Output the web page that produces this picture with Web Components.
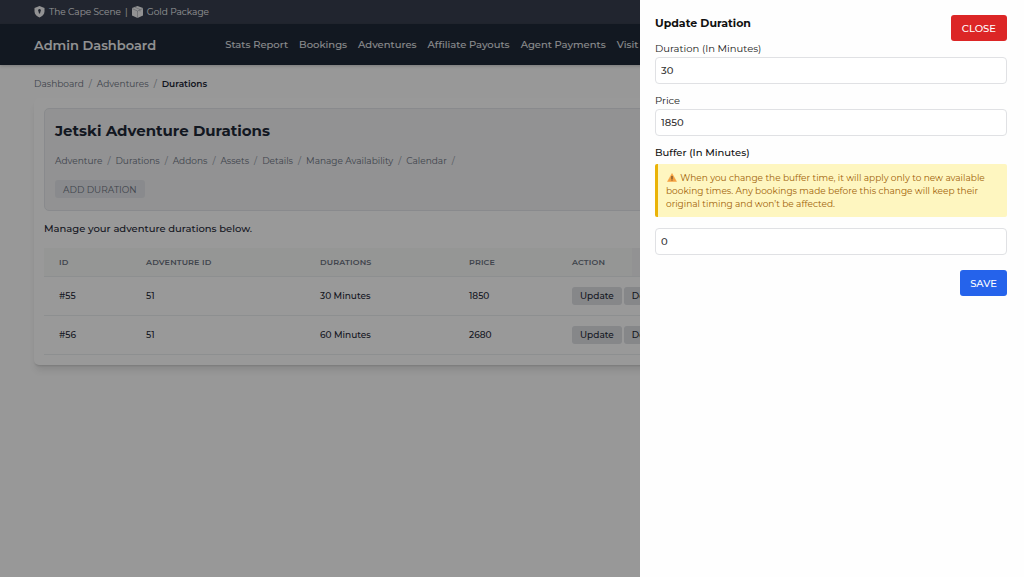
<!DOCTYPE html>
<html lang="en">
<head>
<meta charset="utf-8">
<meta name="viewport" content="width=device-width, initial-scale=1">
<title>Admin Dashboard</title>
<style>
    body {
        margin: 0;
        min-height: 100vh;
        overflow: hidden;
        background: #fdfdfd;
        color: #1f2937;
        font-family: Montserrat, Inter, "Open Sans", sans-serif;
        font-size: 9px;
    }
</style>
</head>
<body>
<admin-topbar></admin-topbar>
<admin-header></admin-header>
<crumb-trail></crumb-trail>
<durations-card>
    <durations-table></durations-table>
</durations-card>
<side-drawer>
    <span slot="title">Update Duration</span>
    <text-field label="Duration (In Minutes)" value="30"></text-field>
    <text-field label="Price" value="1850"></text-field>
    <text-field label="Buffer (In Minutes)" value="0" strong>
        <warning-note>When you change the buffer time, it will apply only to new available booking times. Any bookings made before this change will keep their original timing and won’t be affected.</warning-note>
    </text-field>
</side-drawer>

<script>
function attach(el, html) {
    const template = document.createElement('template');
    template.innerHTML = html;
    const root = el.attachShadow({ mode: 'open' });
    root.appendChild(template.content.cloneNode(true));
    return root;
}

class AdminTopbar extends HTMLElement {
    constructor() {
        super();
        attach(this, `
<style>
    :host {
        display: flex;
        align-items: center;
        gap: 4px;
        height: 24px;
        padding: 0 34px;
        background: #383f4f;
        color: #f3f4f6;
        line-height: 16px;
    }
    svg { width: 11px; height: 12px; fill: #f3f4f6; }
    svg path + path { fill: none; stroke: #8d919a; stroke-width: 1; }
</style>
<svg viewBox="0 0 22 24" aria-hidden="true">
    <path fill-rule="evenodd" d="M11 0 L21 4 V11 C21 17 16 21 11 23 C6 21 1 17 1 11 V4 Z M11 6 a3 3 0 0 0 -2 5 L10 15 H12 L13 11 A3 3 0 0 0 11 6 Z"/>
</svg>
<span>The Cape Scene</span>
<span>|</span>
<svg viewBox="0 0 22 24" aria-hidden="true">
    <path d="M11 0 L22 4 V19 L11 24 L0 19 V4 Z"/>
    <path d="M0 5 L11 10 L22 5 M11 10 V24 M5 2 L16 7 V11"/>
</svg>
<span>Gold Package</span>
`);
    }
}
customElements.define('admin-topbar', AdminTopbar);

class AdminHeader extends HTMLElement {
    constructor() {
        super();
        attach(this, `
<style>
    :host {
        display: grid;
        grid-template-columns: 1fr 4fr;
        align-items: center;
        height: 41px;
        padding: 0 34px;
        background: #1f2937;
        color: #f3f4f6;
        box-shadow: 0 1px 3px rgba(0, 0, 0, .2);
    }
    strong { font-size: 13px; font-weight: 600; white-space: nowrap; }
    nav { display: flex; gap: 11px; }
    a {
        color: #e5e7eb;
        font-size: 10px;
        font-weight: 500;
        text-decoration: none;
        white-space: nowrap;
    }
</style>
<strong>Admin Dashboard</strong>
<nav>
    <a href="#stats">Stats Report</a>
    <a href="#bookings">Bookings</a>
    <a href="#adventures">Adventures</a>
    <a href="#payouts">Affiliate Payouts</a>
    <a href="#agents">Agent Payments</a>
    <a href="#visit">Visit</a>
</nav>
`);
    }
}
customElements.define('admin-header', AdminHeader);

class CrumbTrail extends HTMLElement {
    constructor() {
        super();
        attach(this, `
<style>
    :host { display: block; padding: 12px 34px 7px; }
    nav {
        display: flex;
        gap: 5px;
        line-height: 14px;
        color: #8b929c;
    }
    a { color: #6b7280; text-decoration: none; }
    b { color: #1f2937; font-weight: 600; }
</style>
<nav aria-label="Breadcrumb">
    <a href="#dashboard">Dashboard</a><span>/</span>
    <a href="#adventures">Adventures</a><span>/</span>
    <b>Durations</b>
</nav>
`);
    }
}
customElements.define('crumb-trail', CrumbTrail);

class DurationsCard extends HTMLElement {
    constructor() {
        super();
        attach(this, `
<style>
    :host {
        display: block;
        margin: 0 34px;
        padding: 10px;
        background: #fff;
        border-radius: 5px;
        box-shadow: 0 7px 7px -2px rgba(0, 0, 0, .1), 0 2px 2px -1px rgba(0, 0, 0, .12);
    }
    header {
        padding: 12px 10px;
        background: #f3f4f6;
        border: 1px solid #e5e7eb;
        border-radius: 5px;
    }
    h1 {
        margin: 0 0 13px;
        font-size: 15px;
        line-height: 20px;
        font-weight: 700;
    }
    nav {
        display: flex;
        gap: 5px;
        margin-bottom: 12px;
        line-height: 14px;
        color: #8b929c;
    }
    a { color: #6b7280; text-decoration: none; }
    button {
        display: block;
        height: 18px;
        padding: 0 8px;
        border: 0;
        border-radius: 3px;
        background: #e5e7eb;
        color: #6b7280;
        font: inherit;
    }
    p {
        margin: 10px 0 11px;
        font-size: 10px;
        line-height: 16px;
        font-weight: 500;
    }
</style>
<header>
    <h1>Jetski Adventure Durations</h1>
    <nav>
        <a href="#adventure">Adventure</a><span>/</span>
        <a href="#durations">Durations</a><span>/</span>
        <a href="#addons">Addons</a><span>/</span>
        <a href="#assets">Assets</a><span>/</span>
        <a href="#details">Details</a><span>/</span>
        <a href="#availability">Manage Availability</a><span>/</span>
        <a href="#calendar">Calendar</a><span>/</span>
    </nav>
    <button type="button">ADD DURATION</button>
</header>
<p>Manage your adventure durations below.</p>
<slot></slot>
`);
    }
}
customElements.define('durations-card', DurationsCard);

class DurationsTable extends HTMLElement {
    constructor() {
        super();
        const rows = [
            ['#55', '51', '30 Minutes', '1850'],
            ['#56', '51', '60 Minutes', '2680']
        ];
        const body = rows.map(row => `
    <tr>
        ${row.map(cell => `<td>${cell}</td>`).join('')}
        <td colspan="2"><div><button type="button">Update</button><button type="button">Delete</button></div></td>
    </tr>`).join('');
        attach(this, `
<style>
    :host { display: block; }
    table {
        width: 100%;
        table-layout: fixed;
        border-collapse: collapse;
        font-weight: 500;
    }
    .id { width: 87px; }
    .adventure { width: 174px; }
    .duration { width: 149px; }
    .price { width: 103px; }
    .action { width: 75px; }
    th, td {
        box-sizing: border-box;
        padding: 0 15px;
        border-bottom: 1px solid #eceef0;
        text-align: left;
        white-space: nowrap;
    }
    th {
        height: 28px;
        background: #f8faf9;
        color: #6b7280;
        font-size: 8px;
        font-weight: 600;
        letter-spacing: .02em;
    }
    th:last-child { background: #f3f4f6; }
    td { height: 39px; }
    div { display: flex; gap: 2px; }
    button {
        height: 18px;
        padding: 0 8px;
        border: 0;
        border-radius: 3px;
        background: #dfe1e5;
        color: #1f2937;
        font: inherit;
    }
</style>
<table>
    <colgroup>
        <col class="id"><col class="adventure"><col class="duration"><col class="price"><col class="action"><col>
    </colgroup>
    <thead>
        <tr><th>ID</th><th>ADVENTURE ID</th><th>DURATIONS</th><th>PRICE</th><th>ACTION</th><th></th></tr>
    </thead>
    <tbody>${body}</tbody>
</table>
`);
    }
}
customElements.define('durations-table', DurationsTable);

// Backdrop plus the panel that slides in from the right
class SideDrawer extends HTMLElement {
    constructor() {
        super();
        attach(this, `
<style>
    :host {
        position: fixed;
        inset: 0;
        display: flex;
        justify-content: flex-end;
        background: rgba(0, 0, 0, .4);
        color: #111;
    }
    aside {
        box-sizing: border-box;
        width: 37.5%;
        padding: 15px 17px 15px 15px;
        background: #fefefe;
        overflow: auto;
    }
    header {
        display: flex;
        align-items: flex-start;
        justify-content: space-between;
    }
    h2 {
        margin: 0;
        font-size: 11px;
        line-height: 16px;
        font-weight: 700;
    }
    form {
        display: flex;
        flex-direction: column;
        gap: 9px;
    }
    button {
        height: 26px;
        padding: 0 10px;
        border: 0;
        border-radius: 3px;
        color: #fff;
        font: inherit;
        font-size: 10px;
        font-weight: 500;
    }
    .close { padding: 0 11px; background: #dc2626; }
    .save { align-self: flex-end; margin-top: 6px; background: #2563eb; }
</style>
<aside>
    <header>
        <h2><slot name="title"></slot></h2>
        <button class="close" type="button">CLOSE</button>
    </header>
    <form>
        <slot></slot>
        <button class="save" type="button">SAVE</button>
    </form>
</aside>
`);
    }
}
customElements.define('side-drawer', SideDrawer);

class TextField extends HTMLElement {
    constructor() {
        super();
        const root = attach(this, `
<style>
    :host { display: block; }
    label {
        display: block;
        font-size: 10px;
        line-height: 16px;
        color: #222;
    }
    :host([strong]) label { color: #111; font-weight: 500; }
    input {
        display: block;
        box-sizing: border-box;
        width: 100%;
        height: 27px;
        padding: 0 5px;
        border: 1px solid #e0e1e4;
        border-radius: 4px;
        background: #fff;
        color: #333;
        font: inherit;
        font-size: 10px;
        font-weight: 500;
    }
</style>
<label for="field"></label>
<slot></slot>
<input id="field" type="text">
`);
        root.querySelector('label').textContent = this.getAttribute('label');
        root.querySelector('input').value = this.getAttribute('value');
    }
}
customElements.define('text-field', TextField);

class WarningNote extends HTMLElement {
    constructor() {
        super();
        attach(this, `
<style>
    :host {
        display: block;
        margin: 3px 0 11px;
        padding: 7px 8px;
        border-left: 3px solid #eab308;
        border-radius: 2px;
        background: #fef6c0;
        color: #a16207;
        line-height: 13px;
    }
    svg {
        width: 10px;
        height: 9px;
        margin: 0 1px;
        vertical-align: -1px;
    }
</style>
<svg viewBox="0 0 20 18" aria-hidden="true">
    <path d="M10 1 L19 17 H1 Z" fill="#f5a040" stroke="#f5a040" stroke-width="1" stroke-linejoin="round"/>
    <path d="M9 6 H11 L11 12 H9 Z M9 13 H11 V15 H9 Z" fill="#4b3b28"/>
</svg>
<slot></slot>
`);
    }
}
customElements.define('warning-note', WarningNote);
</script>
</body>
</html>
